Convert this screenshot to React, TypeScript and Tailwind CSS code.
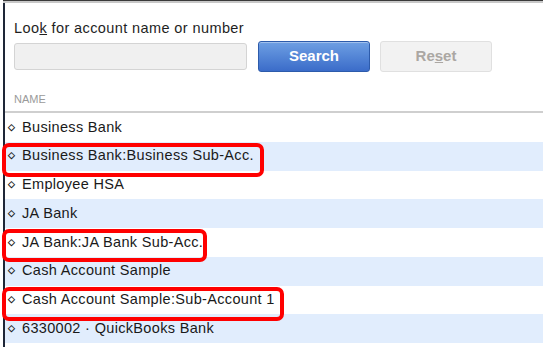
import React from "react";

const rows = [
  "Business Bank",
  "Business Bank:Business Sub-Acc.",
  "Employee HSA",
  "JA Bank",
  "JA Bank:JA Bank Sub-Acc.",
  "Cash Account Sample",
  "Cash Account Sample:Sub-Account 1",
  "6330002 · QuickBooks Bank",
];

export default function App() {
  return (
    <div
      className="relative w-[543px] h-[357px] bg-white overflow-hidden"
      style={{ fontFamily: '"Liberation Sans", Arial, sans-serif' }}
    >
      <div className="absolute left-[3px] top-0 right-0 h-[3px] border-t border-t-[#3a3a3a] border-b-2 border-b-[#c8c8c8]" />
      <div className="flex h-full pt-[3px]">
        <div className="w-[3px] shrink-0" />
        <div className="w-[2px] shrink-0 h-[344px] bg-[#1e2637]" />
        <div className="flex-1 flex flex-col">
          <div className="pl-[9px] pt-[16px] text-[14.5px] tracking-[0.4px] text-[#1f1f1f] leading-[18px]">
            Loo<span className="underline">k</span> for account name or number
          </div>
          <div className="flex items-center pl-[9px] mt-[4px] h-[31px]">
            <div className="w-[233px] h-[27px] rounded-[3px] bg-[#f0f0f0] border border-[#d4d4d4]" />
            <button className="ml-[11px] w-[112px] h-[31px] rounded-[3px] border border-[#2d5bab] bg-gradient-to-b from-[#6e9fe3] to-[#3b6cc9] text-white font-bold text-[15px] shadow-[inset_0_1px_0_rgba(255,255,255,0.35)]">
              Search
            </button>
            <button className="ml-[10px] w-[112px] h-[31px] rounded-[3px] border border-[#e0e0e0] bg-[#f2f2f2] text-[#aba7a3] font-bold text-[15px]">
              Re<span className="underline">s</span>et
            </button>
          </div>
          <div className="pl-[9px] mt-[20px] h-[19px] text-[11px] text-[#9a9a9a] leading-[14px]">
            NAME
          </div>
          <div className="h-[2px] bg-[#cfcfcf]" />
          <div className="flex flex-col">
            {rows.map((r, i) => (
              <div
                key={r}
                className={`h-[28.75px] flex items-center pl-[3px] text-[14.5px] tracking-[0.33px] text-[#1a1a1a] ${
                  i % 2 === 1 ? "bg-[#e1edfd]" : "bg-white"
                }`}
              >
                <span className="text-[9px] w-[14px] text-[#222] font-bold tracking-normal">◇</span>
                <span>{r}</span>
              </div>
            ))}
          </div>
        </div>
      </div>
      <div className="absolute left-[2px] top-[143px] w-[262px] h-[34px] border-[4px] border-[#ff0000] rounded-[7px]" />
      <div className="absolute left-[2px] top-[229px] w-[205px] h-[33px] border-[4px] border-[#ff0000] rounded-[7px]" />
      <div className="absolute left-[2px] top-[287px] w-[282px] h-[34px] border-[4px] border-[#ff0000] rounded-[7px]" />
    </div>
  );
}
